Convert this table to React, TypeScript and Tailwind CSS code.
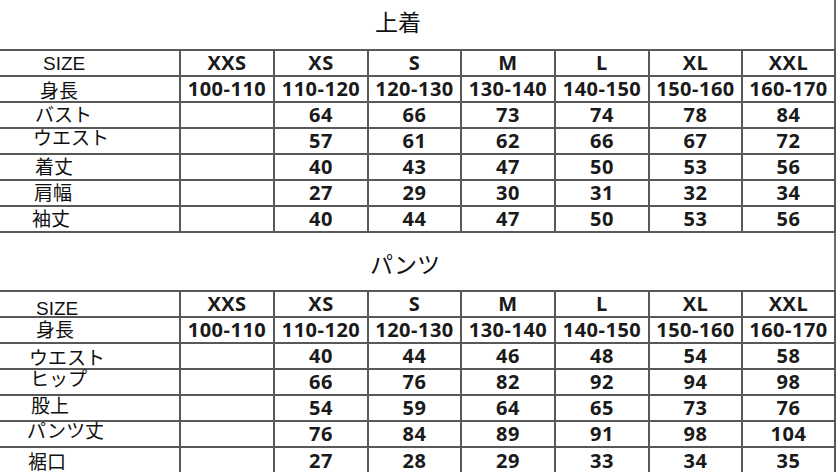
import React from "react";

type Row = { label: string; cls: string; cells: string[] };

const sizes = ["XXS", "XS", "S", "M", "L", "XL", "XXL"];
const heights = ["100-110", "110-120", "120-130", "130-140", "140-150", "150-160", "160-170"];

const topRows: Row[] = [
  { label: "SIZE", cls: "pl-[43px]", cells: sizes },
  { label: "身長", cls: "pl-[40px] pt-[4px]", cells: heights },
  { label: "バスト", cls: "pl-[35px]", cells: ["", "64", "66", "73", "74", "78", "84"] },
  { label: "ウエスト", cls: "pl-[33px] pb-[6px]", cells: ["", "57", "61", "62", "66", "67", "72"] },
  { label: "着丈", cls: "pl-[35px]", cells: ["", "40", "43", "47", "50", "53", "56"] },
  { label: "肩幅", cls: "pl-[34px]", cells: ["", "27", "29", "30", "31", "32", "34"] },
  { label: "袖丈", cls: "pl-[32px]", cells: ["", "40", "44", "47", "50", "53", "56"] },
];

const bottomRows: Row[] = [
  { label: "SIZE", cls: "pl-[36px] pt-[8px]", cells: sizes },
  { label: "身長", cls: "pl-[36px]", cells: heights },
  { label: "ウエスト", cls: "pl-[29px] pt-[4px]", cells: ["", "40", "44", "46", "48", "54", "58"] },
  { label: "ヒップ", cls: "pl-[30px] pb-[6px]", cells: ["", "66", "76", "82", "92", "94", "98"] },
  { label: "股上", cls: "pl-[31px] pb-[4px]", cells: ["", "54", "59", "64", "65", "73", "76"] },
  { label: "パンツ丈", cls: "pl-[27px] pb-[6px]", cells: ["", "76", "84", "89", "91", "98", "104"] },
  { label: "裾口", cls: "pl-[28px] pt-[4px]", cells: ["", "27", "28", "29", "33", "34", "35"] },
];

function Table({ rows, lastOpen }: { rows: Row[]; lastOpen?: boolean }) {
  return (
    <div
      className={
        lastOpen
          ? "grid grid-cols-[179px_92px_92px_91px_92px_92px_91px_91px] auto-rows-[24px] gap-[2px] bg-[#585858] pt-[2px] pr-[2px]"
          : "grid grid-cols-[179px_92px_92px_91px_92px_92px_91px_91px] auto-rows-[24px] gap-[2px] bg-[#585858] pt-[2px] pr-[2px] pb-[2px]"
      }
    >
      {rows.map((r, i) => (
        <React.Fragment key={i}>
          <div
            className={
              "bg-white flex items-center whitespace-nowrap text-[19px] leading-none text-[#111] font-['Liberation_Sans','Noto_Sans_CJK_JP',sans-serif] " +
              r.cls +
              (lastOpen && i === rows.length - 1 ? " h-[25px]" : "")
            }
          >
            {r.label}
          </div>
          {r.cells.map((c, j) => (
            <div
              key={j}
              className={
                "bg-white flex items-center justify-center text-[20px] font-bold leading-none tracking-[0.5px] text-[#1a1a1a] font-['Open_Sans','Liberation_Sans',sans-serif]" +
                (lastOpen && i === rows.length - 1 ? " h-[25px]" : "")
              }
            >
              {c}
            </div>
          ))}
        </React.Fragment>
      ))}
    </div>
  );
}

export default function App() {
  return (
    <div className="w-[838px] h-[474px] bg-white overflow-hidden">
      <div className="w-[836px] flex flex-col">
        <div className="h-[49px] border-r-2 border-[#6a6a6a] flex items-center justify-center pr-[38px] pb-[2px] text-[23px] text-[#111] font-['Liberation_Sans','Noto_Sans_CJK_JP',sans-serif]">
          上着
        </div>
        <Table rows={topRows} />
        <div className="h-[57px] border-r-2 border-[#6a6a6a] flex items-center justify-center pr-[24px] pt-[8px] text-[23px] text-[#111] font-['Liberation_Sans','Noto_Sans_CJK_JP',sans-serif]">
          パンツ
        </div>
        <Table rows={bottomRows} lastOpen />
      </div>
    </div>
  );
}
